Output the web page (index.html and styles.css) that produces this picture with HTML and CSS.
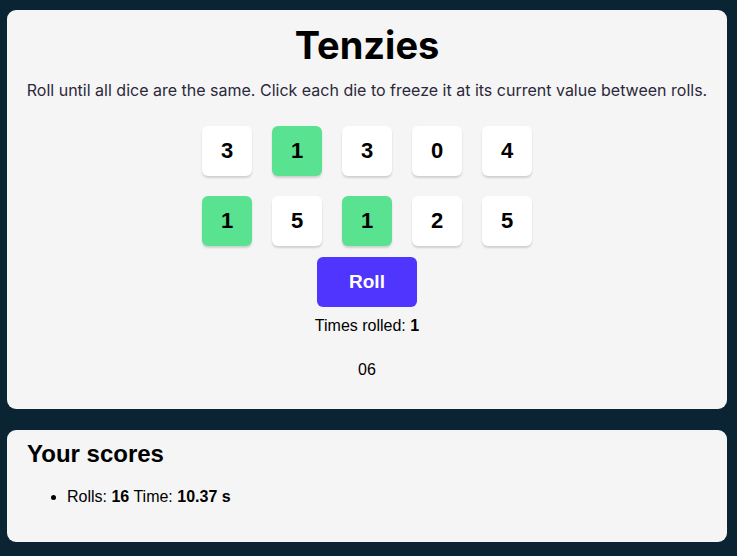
FILE: index.html
```html
<!DOCTYPE html>
<html>
<head>
<meta charset="utf-8">
<link rel="stylesheet" href="styles.css">
</head>
<body>
<div class="page">
  <main class="card game">
    <h1 class="title">Tenzies</h1>
    <p class="instructions">Roll until all dice are the same. Click each die to freeze it at its current value between rolls.</p>
    <div class="dice">
      <button class="die">3</button>
      <button class="die held">1</button>
      <button class="die">3</button>
      <button class="die">0</button>
      <button class="die">4</button>
      <button class="die held">1</button>
      <button class="die">5</button>
      <button class="die held">1</button>
      <button class="die">2</button>
      <button class="die">5</button>
    </div>
    <button class="roll">Roll</button>
    <p class="count">Times rolled: <b>1</b></p>
    <p class="timer">06</p>
  </main>
  <section class="card scores">
    <h2 class="scores-title">Your scores</h2>
    <ul class="score-list">
      <li>Rolls: <b>16</b> Time: <b>10.37 s</b></li>
    </ul>
  </section>
</div>
</body>
</html>
```
FILE: styles.css
```css
html, body {
  margin: 0;
  padding: 0;
}
body {
  background: #0B2434;
  font-family: "Liberation Sans", Arial, sans-serif;
  color: #000;
}
.page {
  display: flex;
  flex-direction: column;
  gap: 21px;
  padding: 10px 10px 14px 7px;
}
.card {
  background: #F5F5F5;
  border-radius: 9px;
}
.game {
  display: flex;
  flex-direction: column;
  align-items: center;
  padding: 12px 0 22px;
  height: 399px;
  box-sizing: border-box;
}
.title {
  margin: 0;
  font-family: Inter, sans-serif;
  font-weight: 700;
  font-size: 38px;
  line-height: 46px;
}
.instructions {
  margin: 10px 0 0;
  font-family: Inter, sans-serif;
  font-size: 16px;
  line-height: 24px;
  color: #2B283A;
  text-align: center;
}
.dice {
  display: grid;
  grid-template-columns: repeat(5, 50px);
  grid-auto-rows: 50px;
  gap: 20px;
  margin-top: 24px;
}
.die {
  border: none;
  margin: 0;
  padding: 0;
  background: #FFFFFF;
  border-radius: 6px;
  box-shadow: 0 2px 2px rgba(0, 0, 0, 0.15);
  font-family: "Liberation Sans", Arial, sans-serif;
  font-weight: 700;
  font-size: 22px;
  color: #000;
}
.die.held {
  background: #59E391;
}
.roll {
  margin-top: 11px;
  width: 100px;
  height: 50px;
  border: none;
  border-radius: 6px;
  background: #5035FF;
  color: #fff;
  font-family: "Liberation Sans", Arial, sans-serif;
  font-weight: 700;
  font-size: 19px;
}
.count {
  margin: 9px 0 0;
  font-size: 16px;
  line-height: 20px;
}
.timer {
  margin: 24px 0 0;
  font-size: 16px;
  line-height: 20px;
}
.scores {
  padding: 10px 20px 22px;
  height: 112px;
  box-sizing: border-box;
}
.scores-title {
  margin: 0;
  font-size: 24px;
  line-height: 28px;
}
.score-list {
  margin: 19px 0 0;
  padding-left: 40px;
  font-size: 16px;
  line-height: 20px;
}
```
